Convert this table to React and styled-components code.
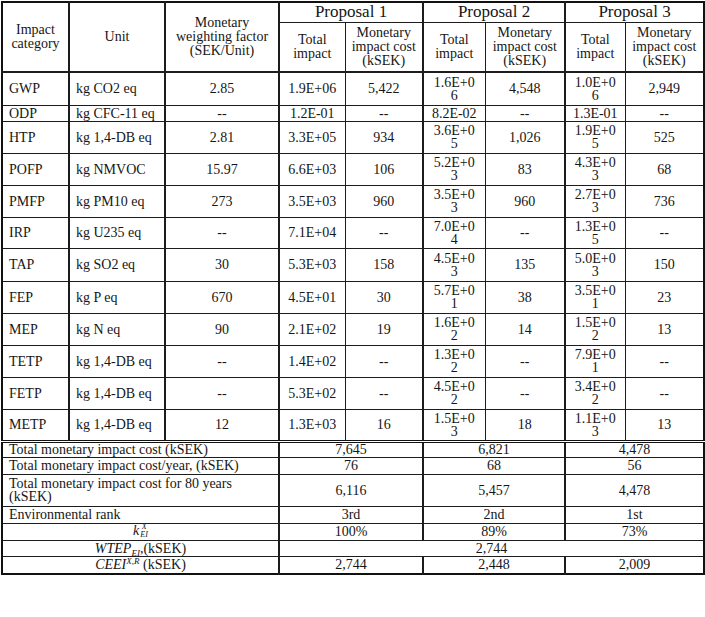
import React from 'react';
import styled, { createGlobalStyle } from 'styled-components';

const GlobalStyle = createGlobalStyle`
  body {
    margin: 0;
    background: #ffffff;
  }
`;

const Page = styled.div`
  width: 705px;
  height: 617px;
  padding: 1px 0 0 1px;
  box-sizing: border-box;
  background: #ffffff;
  font-family: 'Liberation Serif', 'Times New Roman', serif;
  color: #161616;
`;

const Table = styled.table`
  width: 702px;
  table-layout: fixed;
  border-collapse: collapse;
  border: 2px solid #111;
  font-family: 'Liberation Serif', 'Times New Roman', serif;
  font-size: 14px;
  line-height: 14px;
`;

const Row = styled.tr`
  height: ${(props) => props.$h}px;
`;

const Cell = styled.td`
  border: 1px solid #1c1c1c;
  border-left-width: ${(props) => (props.$major ? 2 : 1)}px;
  border-top: ${(props) => (props.$sep ? '3px double #111' : '1px solid #1c1c1c')};
  border-bottom-width: ${(props) => (props.$headEnd ? 2 : 1)}px;
  padding: 0 6px;
  font-family: 'Liberation Serif', 'Times New Roman', serif;
  font-size: 14px;
  line-height: 13px;
  color: #161616;
  text-align: ${(props) => props.$align || 'center'};
  vertical-align: middle;
  white-space: pre-line;
  font-weight: normal;
  overflow: hidden;
`;

const HeadCell = styled(Cell).attrs({ as: 'th' })`
  font-size: ${(props) => (props.$big ? 17 : 14)}px;
  line-height: ${(props) => (props.$big ? 18 : 14)}px;
  padding: 0 2px;
`;

const MathVar = styled.span`
  font-style: italic;
`;

const Scripts = styled.span`
  display: inline-flex;
  flex-direction: column;
  vertical-align: middle;
  font-size: 8px;
  line-height: 8px;
  font-style: italic;
  margin-left: 1px;
  position: relative;
  top: -1px;
`;

const Sub = styled.span`
  display: inline-block;
  font-size: 9px;
  font-style: italic;
  line-height: 9px;
  position: relative;
  top: 3px;
`;

const Sup = styled.span`
  display: inline-block;
  font-size: 9px;
  font-style: italic;
  line-height: 9px;
  position: relative;
  top: -5px;
`;

const widths = [67, 96, 114, 66, 78, 62, 80, 60, 79];
const majorCols = [1, 2, 3, 5, 7];

const data = [
  ['GWP', 'kg CO2 eq', '2.85', '1.9E+06', '5,422', '1.6E+0\n6', '4,548', '1.0E+0\n6', '2,949'],
  ['ODP', 'kg CFC-11 eq', '--', '1.2E-01', '--', '8.2E-02', '--', '1.3E-01', '--'],
  ['HTP', 'kg 1,4-DB eq', '2.81', '3.3E+05', '934', '3.6E+0\n5', '1,026', '1.9E+0\n5', '525'],
  ['POFP', 'kg NMVOC', '15.97', '6.6E+03', '106', '5.2E+0\n3', '83', '4.3E+0\n3', '68'],
  ['PMFP', 'kg PM10 eq', '273', '3.5E+03', '960', '3.5E+0\n3', '960', '2.7E+0\n3', '736'],
  ['IRP', 'kg U235 eq', '--', '7.1E+04', '--', '7.0E+0\n4', '--', '1.3E+0\n5', '--'],
  ['TAP', 'kg SO2 eq', '30', '5.3E+03', '158', '4.5E+0\n3', '135', '5.0E+0\n3', '150'],
  ['FEP', 'kg P eq', '670', '4.5E+01', '30', '5.7E+0\n1', '38', '3.5E+0\n1', '23'],
  ['MEP', 'kg N eq', '90', '2.1E+02', '19', '1.6E+0\n2', '14', '1.5E+0\n2', '13'],
  ['TETP', 'kg 1,4-DB eq', '--', '1.4E+02', '--', '1.3E+0\n2', '--', '7.9E+0\n1', '--'],
  ['FETP', 'kg 1,4-DB eq', '--', '5.3E+02', '--', '4.5E+0\n2', '--', '3.4E+0\n2', '--'],
  ['METP', 'kg 1,4-DB eq', '12', '1.3E+03', '16', '1.5E+0\n3', '18', '1.1E+0\n3', '13'],
];

const rowHeights = [33, 16, 32, 32, 32, 31, 33, 32, 32, 32, 32, 32];

const KLabel = () => (
  <span>
    <MathVar>k</MathVar>
    <Scripts>
      <span>X</span>
      <span>EI</span>
    </Scripts>
  </span>
);

const WtepLabel = () => (
  <span>
    <MathVar>WTEP</MathVar>
    <Sub>EI</Sub>,(kSEK)
  </span>
);

const CeeiLabel = () => (
  <span>
    <MathVar>CEEI</MathVar>
    <Sup>X,R</Sup> (kSEK)
  </span>
);

const summary = [
  { label: 'Total  monetary impact cost (kSEK)', values: ['7,645', '6,821', '4,478'], h: 16 },
  { label: 'Total monetary impact cost/year, (kSEK)', values: ['76', '68', '56'], h: 17 },
  { label: 'Total monetary impact cost for 80 years\n(kSEK)', values: ['6,116', '5,457', '4,478'], h: 32 },
  { label: 'Environmental rank', values: ['3rd', '2nd', '1st'], h: 17 },
  { label: <KLabel />, center: true, values: ['100%', '89%', '73%'], h: 17 },
  { label: <WtepLabel />, center: true, values: ['2,744'], h: 16 },
  { label: <CeeiLabel />, center: true, values: ['2,744', '2,448', '2,009'], h: 18 },
];

const App = () => {
  return (
    <Page>
      <GlobalStyle />
      <Table>
        <colgroup>
          {widths.map((w, i) => (
            <col key={i} style={{ width: w }} />
          ))}
        </colgroup>
        <thead>
          <Row $h={20}>
            <HeadCell rowSpan={2} $headEnd>Impact{'\n'}category</HeadCell>
            <HeadCell rowSpan={2} $major $headEnd>Unit</HeadCell>
            <HeadCell rowSpan={2} $major $headEnd>Monetary{'\n'}weighting factor{'\n'}(SEK/Unit)</HeadCell>
            <HeadCell colSpan={2} $major $big>Proposal 1</HeadCell>
            <HeadCell colSpan={2} $major $big>Proposal 2</HeadCell>
            <HeadCell colSpan={2} $major $big>Proposal 3</HeadCell>
          </Row>
          <Row $h={50}>
            <HeadCell $major $headEnd>Total{'\n'}impact</HeadCell>
            <HeadCell $headEnd>Monetary{'\n'}impact cost{'\n'}(kSEK)</HeadCell>
            <HeadCell $major $headEnd>Total{'\n'}impact</HeadCell>
            <HeadCell $headEnd>Monetary{'\n'}impact cost{'\n'}(kSEK)</HeadCell>
            <HeadCell $major $headEnd>Total{'\n'}impact</HeadCell>
            <HeadCell $headEnd>Monetary{'\n'}impact cost{'\n'}(kSEK)</HeadCell>
          </Row>
        </thead>
        <tbody>
          {data.map((row, r) => (
            <Row key={row[0]} $h={rowHeights[r]}>
              {row.map((v, c) => (
                <Cell key={c} $major={majorCols.includes(c)} $align={c < 2 ? 'left' : 'center'}>
                  {v}
                </Cell>
              ))}
            </Row>
          ))}
          {summary.map((s, r) => (
            <Row key={r} $h={s.h}>
              <Cell colSpan={3} $sep={r === 0} $align={s.center ? 'center' : 'left'}>
                {s.label}
              </Cell>
              {s.values.map((v, i) => (
                <Cell key={i} colSpan={s.values.length === 1 ? 6 : 2} $major $sep={r === 0}>
                  {v}
                </Cell>
              ))}
            </Row>
          ))}
        </tbody>
      </Table>
    </Page>
  );
};

export default App;
